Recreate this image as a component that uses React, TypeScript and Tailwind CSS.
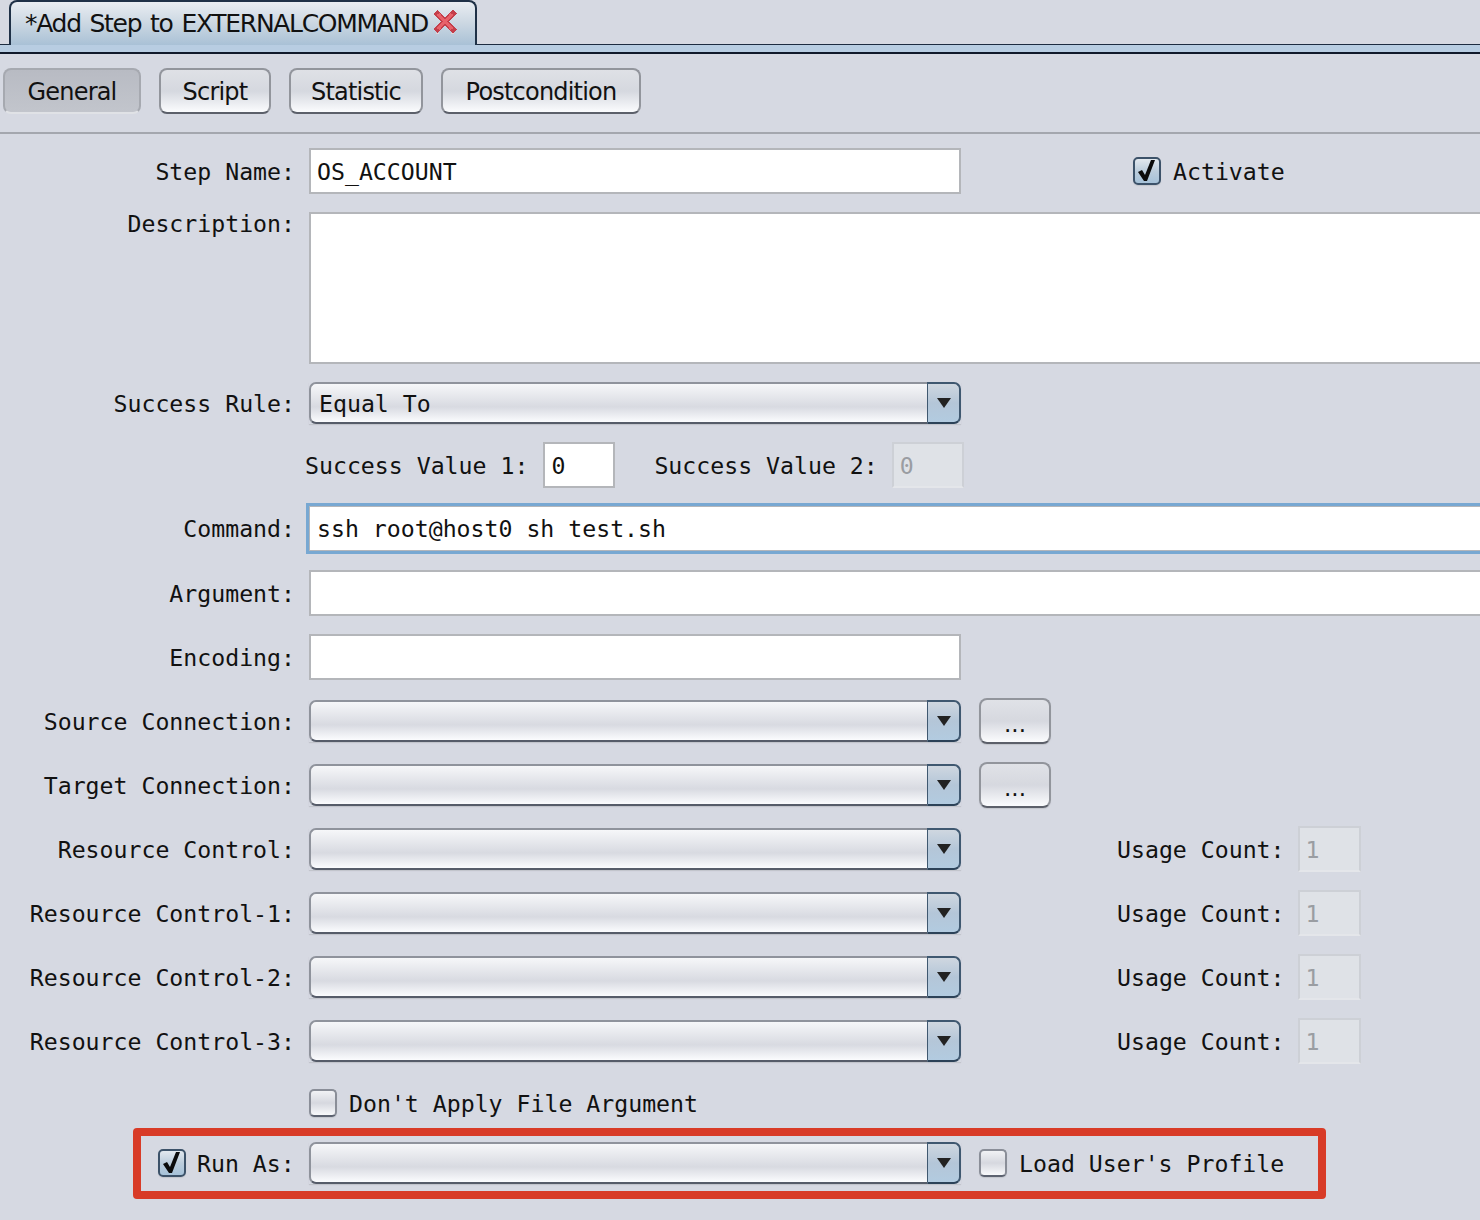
const mono = "font-['DejaVu_Sans_Mono',monospace] text-[23.2px] text-[#111] pt-[2px]";

function CloseIcon() {
  return (
    <svg className="mb-[5px] ml-[5px]" width="24" height="25" viewBox="0 0 24 25" shapeRendering="crispEdges">
      <path d="M4 1L12 8L20 1L24 5L16 12.5L24 20L20 24L12 17L4 24L0 20L8 12.5L0 5z" fill="#c43f4b" />
      <path d="M5 5L19 20M19 5L5 20" fill="none" stroke="#e8626a" strokeWidth="3" />
      <path d="M3 24h3v1H3zM18 24h3v1h-3z" fill="#e9d3d6" />
    </svg>
  );
}

function Arrow() {
  return (
    <div className="flex h-full w-[34px] shrink-0 items-center justify-center rounded-r-[7px] border-2 border-l border-[#3f5870] border-b-[#2c4258] bg-gradient-to-b from-[#cfd7e0] via-[#b4c6d8] to-[#b2cbe0]">
      <svg width="14" height="10" viewBox="0 0 14 10">
        <path d="M0 0h14L7 10z" fill="#222" />
      </svg>
    </div>
  );
}

function Combo({ value = '', width = 'w-[652px]' }: { value?: string; width?: string }) {
  return (
    <div className={`flex h-[42px] ${width} shrink-0 shadow-[0_1px_1px_#c2c5cc]`}>
      <div className={`${mono} flex flex-1 items-center rounded-l-[7px] border-2 border-r-0 border-[#8f939c] border-b-[#565c69] bg-gradient-to-b from-[#f6f7f9] via-[#d8dae1] via-60% to-[#fbfcfe] pl-2`}>
        {value}
      </div>
      <Arrow />
    </div>
  );
}

function TextBox({ value = '', width = 'w-[652px]', height = 'h-[46px]' }: { value?: string; width?: string; height?: string }) {
  return (
    <div className={`${mono} ${width} ${height} flex shrink-0 items-center border-2 border-[#b4b6ba] bg-white pl-[6px]`}>
      {value}
    </div>
  );
}

function DisabledBox({ value, width }: { value: string; width: string }) {
  return (
    <div className={`${mono} ${width} flex h-[46px] shrink-0 items-center border-2 border-[#cdd0d6] border-b-[#e4e6ea] bg-[#dfe2e7] pl-[6px] !text-[#9a9da2]`}>
      {value}
    </div>
  );
}

function CheckBox({ checked = false }: { checked?: boolean }) {
  if (checked) {
    return (
      <div className="flex h-[28px] w-[28px] shrink-0 items-center justify-center rounded-[5px] border-2 border-[#3c5269] bg-gradient-to-b from-[#e3e9ef] via-[#bccddc] to-[#a6c2d9] shadow-[0_1px_1px_#c2c5cc]">
        <svg width="22" height="24" viewBox="0 0 22 24">
          <path d="M2 13L6 11L9 16L15 1H19L11 22H8z" fill="#0b0b0b" />
        </svg>
      </div>
    );
  }
  return (
    <div className="h-[28px] w-[28px] shrink-0 rounded-[5px] border-2 border-[#8a8e98] border-b-[#5c6270] bg-gradient-to-b from-[#f1f2f5] via-[#d6d8df] to-[#f8f9fb] shadow-[0_1px_1px_#c2c5cc]" />
  );
}

function Row({ label, top, children }: { label: string; top: string; children: React.ReactNode }) {
  return (
    <div className={`flex items-center ${top}`}>
      <div className={`${mono} w-[295px] shrink-0 whitespace-pre text-right`}>{label}</div>
      <div className="ml-[14px] flex items-center">{children}</div>
    </div>
  );
}

function DotsButton() {
  return (
    <div className="ml-[18px] flex h-[46px] w-[72px] items-center justify-center rounded-[8px] border-2 border-[#92959c] border-b-[#5c606a] bg-gradient-to-b from-[#e0e2e7] via-[#d6d8df] to-[#fbfcfe] pt-[6px] font-['DejaVu_Sans',sans-serif] text-[23px] text-[#111] shadow-[0_1px_1px_#c2c5cc]">
      ...
    </div>
  );
}

function UsageCount() {
  return (
    <div className="ml-[156px] flex items-center">
      <span className={`${mono} whitespace-pre`}>Usage Count:</span>
      <DisabledBox value="1" width="ml-[13px] w-[63px]" />
    </div>
  );
}

function PageButton({ label, width, active = false }: { label: string; width: string; active?: boolean }) {
  const look = active
    ? 'border-[#a6a9b0] border-b-[#e0e2e6] bg-gradient-to-b from-[#b8bbc3] to-[#c2c5cc]'
    : 'border-[#92959c] border-b-[#5c606a] bg-gradient-to-b from-[#dfe1e6] via-[#d5d8df] to-[#fbfcfe]';
  return (
    <div className={`${width} ${look} flex h-[46px] items-center justify-center rounded-[8px] border-2 pt-[2px] font-['DejaVu_Sans',sans-serif] text-[24px] tracking-[-0.8px] text-[#111]`}>
      {label}
    </div>
  );
}

export default function App() {
  return (
    <div className="h-[1220px] w-[1480px] overflow-hidden bg-[#d6d9e2]">
      {/* tab strip */}
      <div className="flex h-[45px] items-end border-b border-[#1d2c40]">
        <div className="mb-[-1px] ml-[9px] flex h-[45px] w-[468px] items-center rounded-t-[8px] border-2 border-b-0 border-[#1f3147] bg-gradient-to-b from-[#e9edf2] via-[#cbd7e2] to-[#a9c1d6] pl-[14px] font-['DejaVu_Sans',sans-serif] text-[25px] tracking-[-1.3px] [word-spacing:2.2px] text-[#111]">
          <span className="whitespace-pre">*Add Step to EXTERNALCOMMAND</span>
          <CloseIcon />
        </div>
      </div>
      <div className="h-[9px] border-b-2 border-[#10192a] bg-[#b8cde2]" />

      {/* page buttons */}
      <div className="mt-[14px] flex h-[66px] items-start gap-[18px] border-b-2 border-[#a4a7ae] pl-[3px]">
        <PageButton label="General" width="w-[138px]" active />
        <PageButton label="Script" width="w-[112px]" />
        <PageButton label="Statistic" width="w-[134px]" />
        <PageButton label="Postcondition" width="w-[200px]" />
      </div>

      <Row label="Step Name:" top="mt-[14px]">
        <TextBox value="OS_ACCOUNT" />
        <div className="ml-[172px] flex items-center gap-[12px]">
          <CheckBox checked />
          <span className={mono}>Activate</span>
        </div>
      </Row>

      <div className="mt-[18px] flex items-start">
        <div className={`${mono} w-[295px] shrink-0 !pt-0 text-right leading-[24px]`}>Description:</div>
        <TextBox width="ml-[14px] w-[1200px]" height="h-[152px]" />
      </div>

      <Row label="Success Rule:" top="mt-[18px]">
        <Combo value="Equal To" />
      </Row>

      <div className="mt-[18px] flex items-center pl-[305px]">
        <span className={`${mono} whitespace-pre`}>Success Value 1:</span>
        <TextBox value="0" width="ml-[15px] w-[72px]" />
        <span className={`${mono} ml-[39px] whitespace-pre`}>Success Value 2:</span>
        <DisabledBox value="0" width="ml-[14px] w-[72px]" />
      </div>

      <Row label="Command:" top="mt-[15px]">
        <div className="-ml-[3px] h-[51px] w-[1200px] shrink-0 border-[3px] border-[#78a8d2]">
          <div className={`${mono} flex h-full items-center border border-[#b4b6ba] bg-white pl-[7px]`}>
            ssh root@host0 sh test.sh
          </div>
        </div>
      </Row>

      <Row label="Argument:" top="mt-[16px]">
        <TextBox width="w-[1200px]" />
      </Row>

      <Row label="Encoding:" top="mt-[18px]">
        <TextBox />
      </Row>

      <Row label="Source Connection:" top="mt-[18px]">
        <Combo />
        <DotsButton />
      </Row>
      <Row label="Target Connection:" top="mt-[18px]">
        <Combo />
        <DotsButton />
      </Row>

      <Row label="Resource Control:" top="mt-[18px]">
        <Combo />
        <UsageCount />
      </Row>
      <Row label="Resource Control-1:" top="mt-[18px]">
        <Combo />
        <UsageCount />
      </Row>
      <Row label="Resource Control-2:" top="mt-[18px]">
        <Combo />
        <UsageCount />
      </Row>
      <Row label="Resource Control-3:" top="mt-[18px]">
        <Combo />
        <UsageCount />
      </Row>

      <div className="mt-[21px] flex items-center gap-[12px] pl-[309px]">
        <CheckBox />
        <span className={`${mono} whitespace-pre`}>Don't Apply File Argument</span>
      </div>

      {/* highlighted row */}
      <div className="ml-[133px] mt-[6px] flex h-[71px] w-[1193px] items-center rounded-[4px] border-[8px] border-[#d83b27] pl-[17px]">
        <CheckBox checked />
        <span className={`${mono} ml-[11px] w-[98px] whitespace-pre`}>Run As:</span>
        <div className="ml-[14px]">
          <Combo />
        </div>
        <div className="ml-[18px] flex items-center gap-[12px]">
          <CheckBox />
          <span className={`${mono} whitespace-pre`}>Load User's Profile</span>
        </div>
      </div>
    </div>
  );
}
